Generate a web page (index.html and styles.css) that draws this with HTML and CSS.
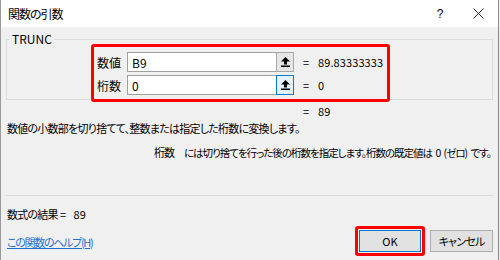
FILE: index.html
```html
<!DOCTYPE html>
<html lang="ja">
<head>
    <meta charset="UTF-8">
    <title>関数の引数</title>
    <link rel="stylesheet" href="styles.css">
</head>
<body>
    <div class="dialog">
        <div class="titlebar">
            <span class="title">関数の引数</span>
            <span class="help">?</span>
            <svg class="close" width="11" height="11" viewBox="0 0 11 11">
                <path d="M0.5 0.5 L10.5 10.5 M10.5 0.5 L0.5 10.5" stroke="#222" stroke-width="1" fill="none"/>
            </svg>
        </div>

        <div class="content">
            <div class="group">
                <div class="group-title">TRUNC</div>
                <div class="args">
                    <div class="arg-row">
                        <label class="arg-label" for="number">数値</label>
                        <div class="field">
                            <input id="number" class="arg-input" type="text" value="B9">
                            <button class="ref-btn">
                                <svg width="9" height="10" viewBox="0 0 9 10"><polygon points="4.5,0 9,4.5 6,4.5 6,7.5 3,7.5 3,4.5 0,4.5" fill="#000"/><rect x="0" y="8.5" width="9" height="1.5" fill="#000"/></svg>
                            </button>
                        </div>
                        <span class="eq">=</span>
                        <span class="val">89.83333333</span>
                    </div>
                    <div class="arg-row">
                        <label class="arg-label" for="digits">桁数</label>
                        <div class="field">
                            <input id="digits" class="arg-input" type="text" value="0">
                            <button class="ref-btn focused">
                                <svg width="9" height="10" viewBox="0 0 9 10"><polygon points="4.5,0 9,4.5 6,4.5 6,7.5 3,7.5 3,4.5 0,4.5" fill="#000"/><rect x="0" y="8.5" width="9" height="1.5" fill="#000"/></svg>
                            </button>
                        </div>
                        <span class="eq">=</span>
                        <span class="val">0</span>
                    </div>
                </div>
            </div>

            <div class="result-row">
                <span class="eq">=</span>
                <span class="val">89</span>
            </div>

            <p class="desc">数値の小数部を切り捨てて、整数または指定した桁数に変換します。</p>
            <p class="arg-desc"><span class="arg-name">桁数</span>には切り捨てを行った後の桁数を指定します。桁数の既定値は 0 (ゼロ) です。</p>

            <div class="separator"></div>

            <div class="formula-result"><span class="jp">数式の結果</span> =&nbsp;&nbsp; 89</div>

            <div class="footer">
                <a class="help-link" href="#">この関数のヘルプ(H)</a>
                <div class="buttons">
                    <div class="ok-mark">
                        <button class="btn default">OK</button>
                    </div>
                    <button class="btn jp">キャンセル</button>
                </div>
            </div>
        </div>
    </div>
</body>
</html>
```

FILE: styles.css
```css
body {
    margin: 0;
    font-family: "Noto Sans CJK JP", sans-serif;
    font-size: 11px;
    font-feature-settings: "palt";
    color: #000;
    background: #f0f0f0;
}
.dialog {
    width: 497px;
    height: 260px;
    border-left: 1px solid #9a9a9a;
    border-right: 1px solid #8a8a8a;
    background: #f0f0f0;
}
.titlebar {
    display: flex;
    align-items: center;
    height: 27px;
    background: #fff;
    padding: 0 14px 0 7px;
}
.title {
    font-size: 12px;
    letter-spacing: -1px;
    line-height: 16px;
}
.help {
    width: 8px;
    margin-left: auto;
    margin-right: 29px;
    text-align: center;
    font-family: "Liberation Sans", sans-serif;
    font-size: 12px;
}
.close {
    display: block;
    flex: none;
}
.content {
    padding: 0 5px;
}
.group {
    margin-top: 12px;
    height: 59px;
    border: 1px solid #dcdcdc;
}
.group-title {
    width: fit-content;
    margin: -8px 0 0 3px;
    padding: 0 2px;
    font-size: 12px;
    line-height: 14px;
    background: #f0f0f0;
}
.args {
    width: 290px;
    margin: -2px 0 0 84px;
    padding: 5px 0 4px 3px;
    border: 3px solid #f00;
    border-radius: 3px;
    display: flex;
    flex-direction: column;
    gap: 3px;
}
.arg-row {
    display: flex;
    align-items: center;
    height: 20px;
}
.arg-label {
    width: 30px;
    font-size: 12px;
}
.field {
    display: flex;
    height: 20px;
}
.arg-input {
    width: 149px;
    height: 20px;
    box-sizing: border-box;
    margin: 0;
    padding: 0 4px;
    border: 1px solid #a0a0a0;
    border-right: none;
    background: #fff;
    font: inherit;
    font-size: 12px;
    outline: none;
}
.ref-btn {
    width: 18px;
    height: 20px;
    box-sizing: border-box;
    margin: 0;
    padding: 0;
    border: 1px solid #a8a8a8;
    background: #e6e6e6;
    display: flex;
    align-items: center;
    justify-content: center;
}
.ref-btn.focused {
    border-color: #0078d7;
    background: #e5f1fb;
}
.eq {
    margin-left: 9px;
    width: 15px;
}
.val {
    font-size: 11px;
    letter-spacing: 0.1px;
}
.result-row {
    display: flex;
    margin: 3px 0 0 297px;
    line-height: 16px;
}
.result-row .eq {
    margin-left: 0;
}
.desc {
    margin: 1px 0 0 1px;
    line-height: 16px;
    letter-spacing: -0.75px;
}
.arg-desc {
    margin: 8px 0 0 148px;
    font-size: 10.5px;
    line-height: 16px;
    letter-spacing: -1px;
    word-spacing: 2px;
    white-space: nowrap;
}
.arg-name {
    margin-right: 10px;
    font-size: 11px;
}
.separator {
    margin-top: 34px;
    height: 1px;
    background: #dcdcdc;
}
.formula-result {
    margin: 10px 0 0 1px;
    line-height: 16px;
}
.jp {
    letter-spacing: -0.8px;
}
.footer {
    display: flex;
    align-items: center;
    justify-content: space-between;
    margin-top: 4px;
    padding-left: 1px;
}
.help-link {
    color: #1a6fd4;
    text-decoration: underline;
    letter-spacing: -1.3px;
    margin-top: 2px;
}
.buttons {
    display: flex;
    align-items: center;
    gap: 5px;
}
.ok-mark {
    padding: 1px;
    border: 3px solid #f00;
    border-radius: 3px;
}
.btn {
    display: block;
    width: 63px;
    height: 22px;
    margin: 0;
    padding: 0;
    border: 1px solid #adadad;
    background: #e1e1e1;
    font: inherit;
    color: #000;
}
.btn.default {
    width: 62px;
    border-color: #0078d7;
}
.btn.jp {
    letter-spacing: -0.8px;
}
```
